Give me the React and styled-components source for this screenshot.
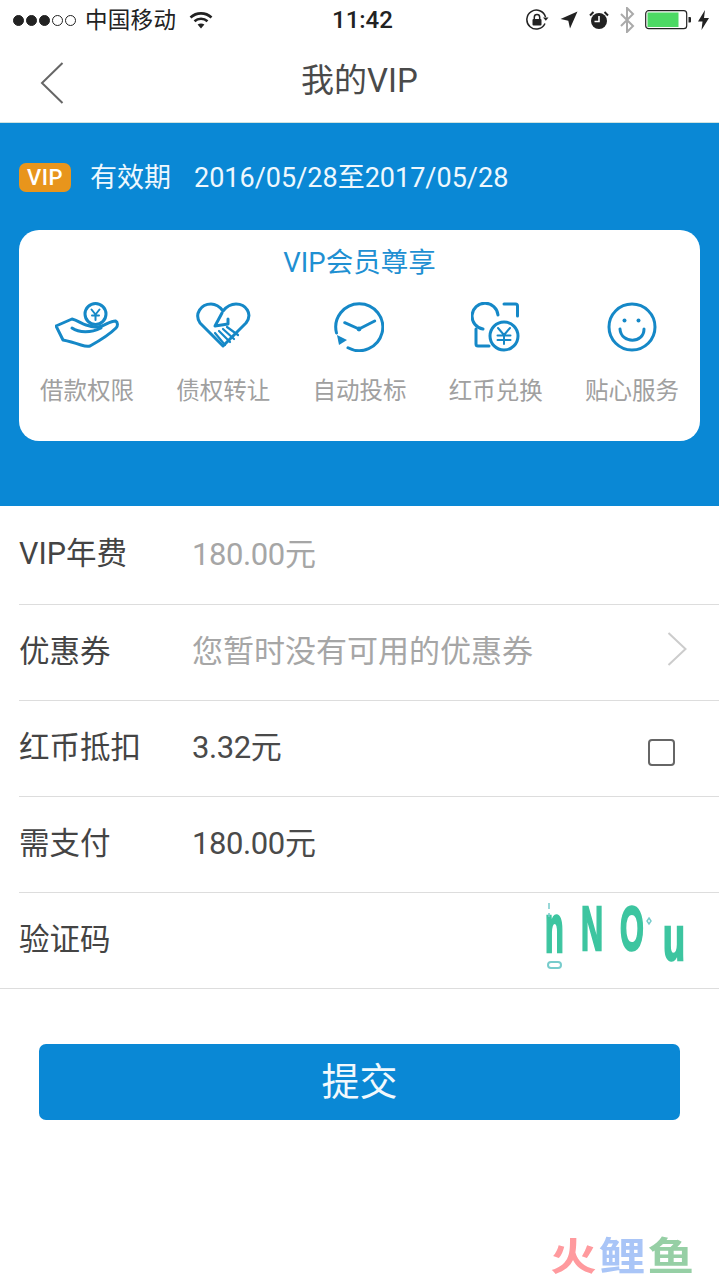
import styled, { createGlobalStyle } from 'styled-components';

const FONT = `Roboto, "Noto Sans CJK SC", sans-serif`;
const BLUE = '#0a88d5';

const Global = createGlobalStyle`
    html, body {
        margin: 0;
        padding: 0;
        background: #fff;
    }
    * { box-sizing: border-box; }
`

const Page = styled.div`
    position: relative;
    width: 719px;
    height: 1280px;
    overflow: hidden;
    background: #fff;
    font-family: ${FONT};
    color: #333;
`

/* status bar */
const StatusBar = styled.div`
    display: flex;
    align-items: center;
    justify-content: space-between;
    height: 40px;
    padding: 0 10px 0 13px;
    position: relative;
`
const StatusSide = styled.div`
    display: flex;
    align-items: center;
`
const Dots = styled.div`
    display: flex;
    gap: 2px;
    margin-right: 9px;
`
const Dot = styled.span`
    width: 11px;
    height: 11px;
    border-radius: 50%;
    border: 1.2px solid #222;
    background: ${p => (p.$on ? '#222' : 'transparent')};
`
const Carrier = styled.span`
    font-size: 22.5px;
    letter-spacing: 0.3px;
    color: #222;
    margin: 0 13px 4px 0;
`
const Clock = styled.span`
    position: absolute;
    left: 332px;
    top: 6px;
    font-size: 24px;
    font-weight: 500;
    color: #222;
`
const StatusIcon = styled.span`
    display: flex;
    margin-left: ${p => p.$gap}px;
`

/* nav */
const NavBar = styled.div`
    display: flex;
    align-items: center;
    justify-content: center;
    height: 83px;
    padding-bottom: 6px;
    position: relative;
    border-bottom: 1px solid #cfe3e0;
`
const NavTitle = styled.h1`
    margin: 0;
    font-size: 33px;
    font-weight: 400;
    color: #4a4a4a;
`
const Back = styled.svg`
    position: absolute;
    left: 40px;
    top: 22px;
`

/* blue header */
const Hero = styled.section`
    height: 383px;
    background: ${BLUE};
    padding: 40px 19px 0;
`
const ValidRow = styled.div`
    display: flex;
    align-items: center;
    height: 29px;
`
const ValidText = styled.span`
    margin-bottom: 4px;
    color: #eef8fe;
    font-size: 27px;
    font-weight: 400;
`
const Badge = styled.span`
    display: flex;
    align-items: center;
    justify-content: center;
    width: 52px;
    height: 29px;
    margin-right: 19px;
    background: #e8951c;
    border-radius: 7px;
    color: #fff;
    font-size: 22px;
    font-weight: 500;
    letter-spacing: 0.5px;
`
const Dates = styled.span`
    margin-left: 23px;
`
const Card = styled.div`
    margin-top: 38px;
    height: 211px;
    background: #fff;
    border-radius: 20px;
    padding-top: 16px;
`
const CardTitle = styled.div`
    text-align: center;
    font-size: 27.5px;
    line-height: 34px;
    font-weight: 400;
    color: #1f90d2;
`
const Perks = styled.div`
    display: grid;
    grid-template-columns: repeat(5, 1fr);
    margin-top: 22px;
`
const Perk = styled.div`
    display: flex;
    flex-direction: column;
    align-items: center;
`
const PerkIcon = styled.svg`
    display: block;
    height: 50px;
    fill: none;
    stroke: #1588c7;
    stroke-width: 3;
    stroke-linecap: round;
    stroke-linejoin: round;
`
const PerkLabel = styled.span`
    margin-top: 22px;
    font-size: 23.5px;
    line-height: 34px;
    color: #a0a0a0;
`

/* form rows */
const Row = styled.div`
    display: grid;
    grid-template-columns: 173px 1fr auto;
    align-items: center;
    height: ${p => (p.$first ? 99 : 96)}px;
    margin-left: ${p => (p.$full ? 0 : 19)}px;
    padding: 0 ${p => (p.$full ? 34 : 32)}px 8px ${p => (p.$full ? 19 : 0)}px;
    border-bottom: 1px solid #ddd;
`
const Label = styled.span`
    font-size: 30.5px;
    font-weight: 400;
    color: #444;
`
const Value = styled.span`
    font-size: 31px;
    font-weight: 400;
    letter-spacing: ${p => (p.$tight ? '-0.4px' : '0')};
    color: ${p => (p.$muted ? '#a6a6a6' : '#4a4a4a')};
`
const Check = styled.span`
    display: block;
    width: 27px;
    height: 27px;
    margin: 16px 12px 0 0;
    border: 2px solid #666;
    border-radius: 4px;
`

/* captcha */
const Captcha = styled.div`
    position: relative;
    display: flex;
    align-items: flex-start;
    width: 142px;
    height: 72px;
    padding-left: 2px;
    filter: blur(0.5px);
`
const CaptchaChar = styled.span`
    width: ${p => p.$w}px;
    margin-top: ${p => p.$top}px;
    font-family: "Liberation Sans", sans-serif;
    font-size: 36px;
    line-height: 36px;
    font-weight: 700;
    color: #3dc5a0;
    -webkit-text-stroke: 1.4px #3dc5a0;
    transform: scaleY(${p => p.$sy}) scaleX(${p => p.$sx || 0.85});
    transform-origin: left top;
`
const CaptchaNoise = styled.svg`
    position: absolute;
    left: 0;
    top: 0;
`

const Submit = styled.button`
    display: block;
    width: 641px;
    height: 76px;
    margin: 55px 0 0 39px;
    padding: 0 0 7px;
    border: 0;
    border-radius: 7px;
    background: ${BLUE};
    color: #f2f9fd;
    font-family: ${FONT};
    font-size: 38px;
    font-weight: 400;
`

/* watermark */
const Mark = styled.div`
    position: absolute;
    left: 550px;
    top: 1235px;
    display: flex;
    gap: 2px;
    font-family: "Liberation Sans", "Noto Sans CJK SC", sans-serif;
    font-size: 44px;
    line-height: 44px;
    font-weight: 700;
    transform: scale(1.06, 0.88);
    transform-origin: left center;
`
const MarkChar = styled.span`
    color: ${p => p.$color};
`

const Wifi = () => (
    <svg width="24" height="18" viewBox="0 0 24 18" fill="none" stroke="#222" strokeWidth="2.6">
        <path d="M1.5 6.5C7.5 1 16.5 1 22.5 6.5" />
        <path d="M5.5 10.2C9.2 7 14.8 7 18.5 10.2" />
        <path d="M12 17.5L8.6 13.6C10.6 12.2 13.4 12.2 15.4 13.6Z" fill="#222" stroke="none" />
    </svg>
)

const RotationLock = () => (
    <svg width="23" height="22" viewBox="0 0 23 22" fill="none" stroke="#222" strokeWidth="1.5">
        <path d="M19 14.5A9.5 9.5 0 1 1 19.5 8" />
        <path d="M17 8.5h5.5l-2.7 3.2Z" fill="#222" stroke="none" />
        <rect x="6.5" y="10" width="9" height="6.5" rx="1" fill="#222" stroke="none" />
        <path d="M8.3 10V8.2a2.7 2.7 0 0 1 5.4 0V10" />
    </svg>
)

const Arrow = () => (
    <svg width="18" height="18" viewBox="0 0 18 18">
        <path d="M17.5 0.5L10 17.5 8.3 9.7 0.5 8Z" fill="#222" />
    </svg>
)

const Alarm = () => (
    <svg width="20" height="20" viewBox="0 0 20 20">
        <circle cx="10" cy="11" r="8" fill="#222" />
        <path d="M10 6v5.5H5.5" fill="none" stroke="#fff" strokeWidth="1.6" />
        <path d="M1 5.5L4.5 2M19 5.5L15.5 2" stroke="#222" strokeWidth="2" />
    </svg>
)

const Bluetooth = () => (
    <svg width="16" height="26" viewBox="0 0 16 26" fill="none" stroke="#aaa" strokeWidth="2">
        <path d="M2 7l12 12-6 6V1l6 6L2 19" />
    </svg>
)

const Battery = () => (
    <svg width="46" height="20" viewBox="0 0 46 20">
        <rect x="0.7" y="0.7" width="41" height="18" rx="3" fill="#fff" stroke="#222" strokeWidth="1.2" />
        <rect x="2.5" y="2.5" width="31" height="14.5" fill="#4cd964" />
        <path d="M43.5 7h1.5a1 1 0 0 1 1 1v3.5a1 1 0 0 1-1 1h-1.5Z" fill="#222" />
    </svg>
)

const Bolt = () => (
    <svg width="11" height="20" viewBox="0 0 11 20">
        <path d="M7 0L0 11.5h4.5L3.5 20 11 8H6Z" fill="#222" />
    </svg>
)

const HandIcon = () => (
    <PerkIcon width="64" viewBox="0 0 64 50">
        <circle cx="40.5" cy="12" r="10.5" />
        <path d="M36.5 7.5l4 5 4-5M40.5 12.5V18M37 13.5h7" strokeWidth="2" />
        <path d="M1 24L17 17C22 18 27 22 31 23 38 25 42 26 47 24 52 22 56 19 60.5 19 63 20 63 24 61 26 56 31 44 39 35 44 32 45 29 44 26 43 20 41 13 39 8 38Z" />
        <path d="M17 26C24 31 36 31 46 26" />
    </PerkIcon>
)

const HeartIcon = () => (
    <PerkIcon width="56" viewBox="0 0 56 50">
        <path d="M28 44L5 21C-1 12 6 2 16 2 21 2 25 5 28 9 32 4 36 2 41 2 51 2 58 12 51 21Z" />
        <path d="M27 11L20 24 33 22V17" />
        <path d="M20 31L30 43M24 29L35 40M28 27L39 37M32 25L43 33" strokeWidth="2.2" />
    </PerkIcon>
)

const ClockIcon = () => (
    <PerkIcon width="50" viewBox="0 0 50 50">
        <path d="M2.5 31A23.5 23.5 0 1 1 14 45.8" />
        <path d="M10.7 20.7L25 27 40.7 19" />
        <circle cx="25" cy="27" r="2.4" fill="#1588c7" stroke="none" />
        <path d="M3 33L13 38 5 43Z" fill="#1588c7" stroke="none" />
    </PerkIcon>
)

const ExchangeIcon = () => (
    <PerkIcon width="50" viewBox="0 0 50 50">
        <path d="M27 13A13 13 0 1 0 12 27" />
        <circle cx="33" cy="34" r="14" />
        <path d="M33 2h11.5a2 2 0 0 1 2 2v10M5 27v15a2 2 0 0 0 2 2h11" />
        <path d="M27 26l6 7 6-7M33 33v9M26.5 33.5h13M26.5 38h13" strokeWidth="2" />
    </PerkIcon>
)

const SmileIcon = () => (
    <PerkIcon width="50" viewBox="0 0 50 50">
        <circle cx="25" cy="25" r="23" />
        <circle cx="17.5" cy="18.5" r="2" fill="#1588c7" stroke="none" />
        <circle cx="31.5" cy="18.5" r="2" fill="#1588c7" stroke="none" />
        <path d="M13 27C14 42 37 42 37 27" />
    </PerkIcon>
)

const perks = [
    { label: '借款权限', Icon: HandIcon },
    { label: '债权转让', Icon: HeartIcon },
    { label: '自动投标', Icon: ClockIcon },
    { label: '红币兑换', Icon: ExchangeIcon },
    { label: '贴心服务', Icon: SmileIcon },
];

const App = () => {
    return (
        <Page>
            <Global />
            <StatusBar>
                <StatusSide>
                    <Dots>
                        {[1, 1, 1, 0, 0].map((on, i) => <Dot key={i} $on={on} />)}
                    </Dots>
                    <Carrier>中国移动</Carrier>
                    <Wifi />
                </StatusSide>
                <Clock>11:42</Clock>
                <StatusSide>
                    <StatusIcon $gap={0}><RotationLock /></StatusIcon>
                    <StatusIcon $gap={11}><Arrow /></StatusIcon>
                    <StatusIcon $gap={11}><Alarm /></StatusIcon>
                    <StatusIcon $gap={10}><Bluetooth /></StatusIcon>
                    <StatusIcon $gap={10}><Battery /></StatusIcon>
                    <StatusIcon $gap={7}><Bolt /></StatusIcon>
                </StatusSide>
            </StatusBar>

            <NavBar>
                <Back width="24" height="42" viewBox="0 0 24 42" fill="none" stroke="#666" strokeWidth="2">
                    <path d="M22.5 1L2 21l20.5 20" />
                </Back>
                <NavTitle>我的VIP</NavTitle>
            </NavBar>

            <Hero>
                <ValidRow>
                    <Badge>VIP</Badge>
                    <ValidText>
                        有效期
                        <Dates>2016/05/28至2017/05/28</Dates>
                    </ValidText>
                </ValidRow>
                <Card>
                    <CardTitle>VIP会员尊享</CardTitle>
                    <Perks>
                        {perks.map(({ label, Icon }) => (
                            <Perk key={label}>
                                <Icon />
                                <PerkLabel>{label}</PerkLabel>
                            </Perk>
                        ))}
                    </Perks>
                </Card>
            </Hero>

            <Row $first>
                <Label>VIP年费</Label>
                <Value $muted $tight>180.00元</Value>
            </Row>
            <Row>
                <Label>优惠券</Label>
                <Value $muted>您暂时没有可用的优惠券</Value>
                <svg width="20" height="34" viewBox="0 0 20 34" fill="none" stroke="#ccc" strokeWidth="2">
                    <path d="M1.5 1L18.5 17 1.5 33" />
                </svg>
            </Row>
            <Row>
                <Label>红币抵扣</Label>
                <Value $tight>3.32元</Value>
                <Check />
            </Row>
            <Row>
                <Label>需支付</Label>
                <Value $tight>180.00元</Value>
            </Row>
            <Row $full>
                <Label>验证码</Label>
                <span />
                <Captcha>
                    <CaptchaChar $w={36} $top={-6} $sy={1.9}>n</CaptchaChar>
                    <CaptchaChar $w={39} $top={-4} $sy={1.75}>N</CaptchaChar>
                    <CaptchaChar $w={43} $top={-4} $sy={1.75}>O</CaptchaChar>
                    <CaptchaChar $w={22} $top={6} $sy={1.75} $sx={1}>u</CaptchaChar>
                    <CaptchaNoise width="142" height="72" viewBox="0 0 142 72" fill="none" stroke="#7cc" strokeWidth="1.5">
                        <path d="M6 2v6M6 12v4" />
                        <path d="M106 17l2 3-2 3-2-3Z" />
                        <rect x="5" y="61" width="13" height="6" rx="3" strokeWidth="2" />
                    </CaptchaNoise>
                </Captcha>
            </Row>

            <Submit>提交</Submit>

            <Mark>
                <MarkChar $color="#ff9a9e">火</MarkChar>
                <MarkChar $color="#a9c5f7">鲤</MarkChar>
                <MarkChar $color="#96cfa5">鱼</MarkChar>
            </Mark>
        </Page>
    )
}

export default App
